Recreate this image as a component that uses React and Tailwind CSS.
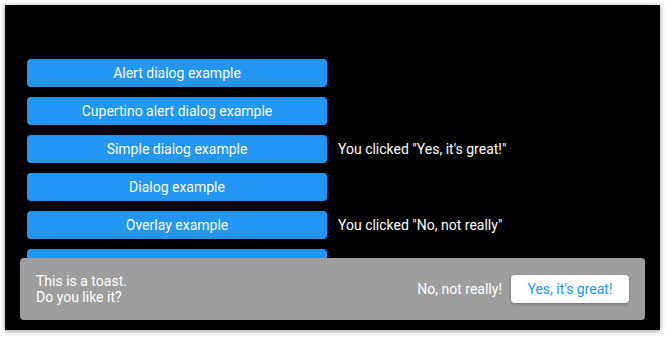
import React from 'react';

const buttons = [
  { label: 'Alert dialog example', note: '' },
  { label: 'Cupertino alert dialog example', note: '' },
  { label: 'Simple dialog example', note: 'You clicked "Yes, it\'s great!"' },
  { label: 'Dialog example', note: '' },
  { label: 'Overlay example', note: 'You clicked "No, not really"' },
  { label: '', note: '' },
];

const App = () => {
  return (
    <div className="w-[669px] h-[340px] bg-white p-[5px] font-['Roboto',sans-serif]">
      <div className="relative w-[655px] h-[325px] bg-black overflow-hidden shadow-[0_1px_5px_rgba(0,0,0,0.45)]">
        {/* Buttons */}
        <div className="flex flex-col gap-[10px] pt-[54px] pl-[22px]">
          {buttons.map((b, i) => (
            <div key={i} className="flex items-center">
              <button className="w-[300px] h-[28px] bg-[#2196f3] rounded-[4px] text-white text-[14px] leading-none">
                {b.label}
              </button>
              {b.note && <span className="ml-[11px] text-white text-[14px]">{b.note}</span>}
            </div>
          ))}
        </div>

        {/* Toast */}
        <div className="absolute left-[15px] top-[253px] w-[625px] h-[62px] bg-[#9e9e9e] rounded-[4px] flex items-center justify-between pl-[16px] pr-[16px]">
          <div className="text-white text-[14px] leading-[16px]">
            <div>This is a toast.</div>
            <div>Do you like it?</div>
          </div>
          <div className="flex items-center gap-[9px]">
            <span className="text-white text-[14px]">No, not really!</span>
            <button className="w-[118px] h-[28px] bg-white rounded-[4px] text-[#2196f3] text-[14px] shadow-[0_1px_3px_rgba(0,0,0,0.3)]">
              Yes, it's great!
            </button>
          </div>
        </div>
      </div>
    </div>
  );
};

export default App;
